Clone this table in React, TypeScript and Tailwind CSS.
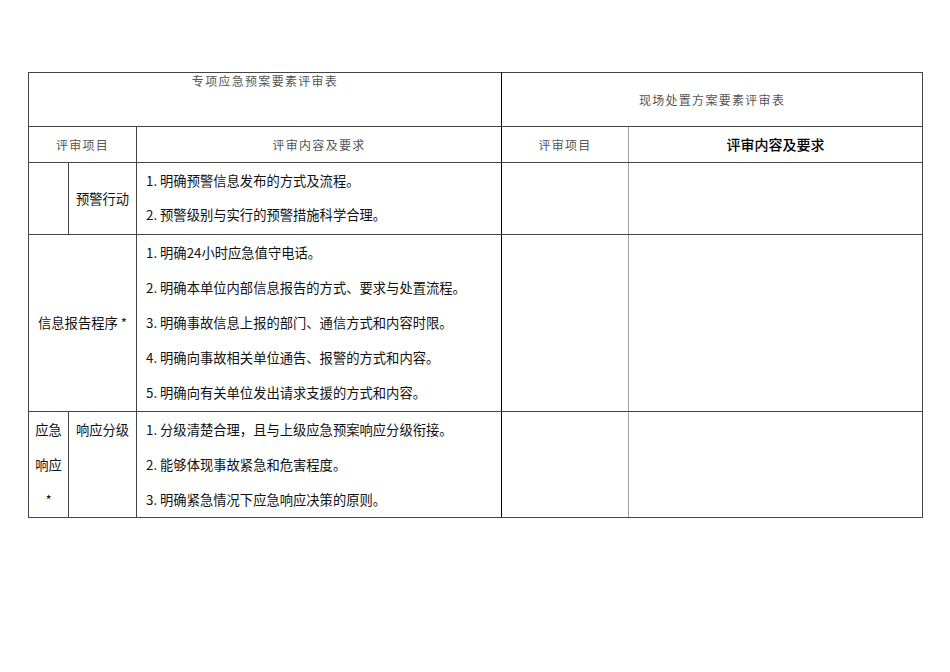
const sans = { fontFamily: '"Noto Sans CJK SC", "Noto Sans", sans-serif' };

const warnItems = ['1. 明确预警信息发布的方式及流程。', '2. 预警级别与实行的预警措施科学合理。'];

const reportItems = [
  '1. 明确24小时应急值守电话。',
  '2. 明确本单位内部信息报告的方式、要求与处置流程。',
  '3. 明确事故信息上报的部门、通信方式和内容时限。',
  '4. 明确向事故相关单位通告、报警的方式和内容。',
  '5. 明确向有关单位发出请求支援的方式和内容。',
];

const levelItems = [
  '1. 分级清楚合理，且与上级应急预案响应分级衔接。',
  '2. 能够体现事故紧急和危害程度。',
  '3. 明确紧急情况下应急响应决策的原则。',
];

const cell = 'border border-[#444] p-0';
const head = 'text-[12px] tracking-[1.3px] text-[#555]';

const App = () => {
  return (
    <div className="min-h-[672px] w-[950px] bg-white pl-[28px] pt-[72px]" style={sans}>
      <table className="w-[894px] table-fixed border-collapse text-[13.3px] text-[#111]">
        <colgroup>
          <col className="w-[40px]" />
          <col className="w-[68px]" />
          <col className="w-[365px]" />
          <col className="w-[127px]" />
          <col className="w-[294px]" />
        </colgroup>
        <tbody>
          <tr className="h-[54px]">
            <td colSpan={3} className={`${cell} border-r-black align-top text-center leading-4 ${head}`}>
              专项应急预案要素评审表
            </td>
            <td colSpan={2} className={`${cell} align-middle text-center ${head}`}>
              现场处置方案要素评审表
            </td>
          </tr>
          <tr className="h-[36px]">
            <td colSpan={2} className={`${cell} text-center ${head}`}>评审项目</td>
            <td className={`${cell} border-r-black text-center ${head}`}>评审内容及要求</td>
            <td className={`${cell} border-r-[#a0a0a0] text-center ${head}`}>评审项目</td>
            <td className={`${cell} text-center text-[14px] font-medium text-black`}>评审内容及要求</td>
          </tr>
          <tr className="h-[72px]">
            <td className={cell}></td>
            <td className={`${cell} text-center`}>预警行动</td>
            <td className={`${cell} border-r-black pl-[9px] pt-[1px] align-top leading-[34px]`}>
              {warnItems.map((t) => (
                <div key={t}>{t}</div>
              ))}
            </td>
            <td className={`${cell} border-r-[#a0a0a0]`}></td>
            <td className={cell}></td>
          </tr>
          <tr className="h-[177px]">
            <td colSpan={2} className={`${cell} text-center`}>信息报告程序 *</td>
            <td className={`${cell} border-r-black pl-[9px] align-top leading-[35px]`}>
              {reportItems.map((t) => (
                <div key={t}>{t}</div>
              ))}
            </td>
            <td className={`${cell} border-r-[#a0a0a0]`}></td>
            <td className={cell}></td>
          </tr>
          <tr className="h-[106px]">
            <td className={`${cell} align-top text-center leading-[35px]`}>
              <div>应急</div>
              <div>响应</div>
              <div>*</div>
            </td>
            <td className={`${cell} align-top text-center leading-[35px]`}>响应分级</td>
            <td className={`${cell} border-r-black pl-[9px] align-top leading-[35px]`}>
              {levelItems.map((t) => (
                <div key={t}>{t}</div>
              ))}
            </td>
            <td className={`${cell} border-r-[#a0a0a0]`}></td>
            <td className={cell}></td>
          </tr>
        </tbody>
      </table>
    </div>
  );
};

export default App;
